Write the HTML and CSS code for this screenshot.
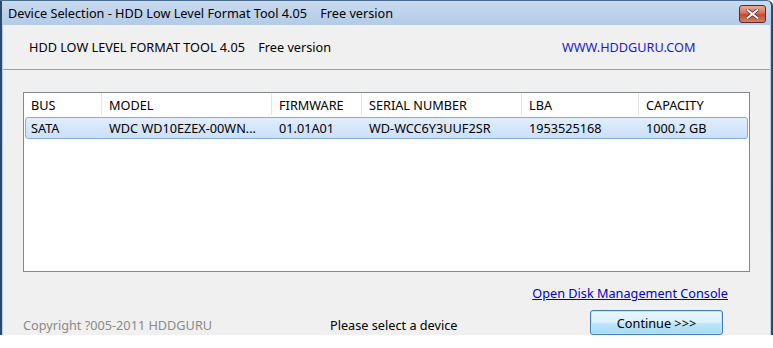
FILE: index.html
```html
<!DOCTYPE html>
<html>
<head>
<meta charset="utf-8">
<link rel="stylesheet" href="styles.css">
</head>
<body>
<div class="window">
  <div class="titlebar">
    <span class="title">Device Selection - HDD Low Level Format Tool 4.05&nbsp;&nbsp;&nbsp;&nbsp;Free version</span>
    <div class="close">
      <svg width="13" height="10" viewBox="0 0 13 10"><path d="M1.5 1 L11.5 9 M11.5 1 L1.5 9" stroke="#5a1a12" stroke-width="3.4" stroke-linecap="square"/><path d="M1.5 1 L11.5 9 M11.5 1 L1.5 9" stroke="#ffffff" stroke-width="2" stroke-linecap="square"/></svg>
    </div>
  </div>
  <div class="client">
    <div class="header">
      <span class="product">HDD LOW LEVEL FORMAT TOOL 4.05&nbsp;&nbsp;&nbsp;&nbsp;Free version</span>
      <span class="site">WWW.HDDGURU.COM</span>
    </div>
    <div class="sep"></div>
    <div class="list">
      <div class="cols head">
        <div class="c">BUS</div>
        <div class="c">MODEL</div>
        <div class="c">FIRMWARE</div>
        <div class="c">SERIAL NUMBER</div>
        <div class="c">LBA</div>
        <div class="c">CAPACITY</div>
      </div>
      <div class="cols row sel">
        <div class="c">SATA</div>
        <div class="c">WDC WD10EZEX-00WN...</div>
        <div class="c">01.01A01</div>
        <div class="c">WD-WCC6Y3UUF2SR</div>
        <div class="c">1953525168</div>
        <div class="c">1000.2 GB</div>
      </div>
    </div>
    <div class="linkrow"><a class="link">Open Disk Management Console</a></div>
    <div class="footer">
      <span class="copy">Copyright ?005-2011 HDDGURU</span>
      <span class="status">Please select a device</span>
      <button class="btn">Continue &gt;&gt;&gt;</button>
    </div>
  </div>
</div>
</body>
</html>
```
FILE: styles.css
```css
html, body { margin: 0; padding: 0; background: #ffffff; }
body { width: 773px; height: 348px; overflow: hidden; font-family: "Noto Sans", "Open Sans", sans-serif; font-size: 12.7px; color: #000; }
.window {
  height: 335px;
  box-sizing: border-box;
  border-left: 2px solid #2b4a6e;
  border-right: 2px solid #2b4a6e;
  border-top: 1px solid #4a6a8e;
  border-top-right-radius: 6px;
  background: linear-gradient(#c9dbef, #b2cae6 25px, #b9d0ea);
  display: flex;
  flex-direction: column;
  padding: 0 1px 0 1px;
  overflow: hidden;
}
.titlebar {
  height: 24px;
  flex: none;
  display: flex;
  align-items: flex-start;
  position: relative;
}
.title { margin: 4px 0 0 5px; line-height: 17px; white-space: pre; }
.close {
  position: absolute; right: 4px; top: 4px;
  width: 25px; height: 16px;
  border: 1px solid #5b2b2b;
  border-radius: 3px;
  background: linear-gradient(#e9a99a, #d7705a 45%, #c24a30 55%, #d7806a);
  display: flex; align-items: center; justify-content: center;
}
.client {
  flex: 1;
  min-height: 0;
  background: #f0f0f0;
  display: flex;
  flex-direction: column;
  overflow: hidden;
}
.header {
  height: 44px;
  flex: none;
  display: flex;
  align-items: center;
  padding: 0 0 0 26px;
}
.product { white-space: pre; width: 533px; }
.site { color: #1a1ad0; }
.sep { height: 1px; flex: none; background: #a0a0a0; margin-bottom: 22px; }
.list {
  flex: none;
  margin: 0 20px 0 20px;
  height: 180px;
  border: 1px solid #828790;
  background: #fff;
  box-sizing: border-box;
}
.cols { display: grid; grid-template-columns: 78px 170px 90px 160px 117px 1fr; }
.head { height: 23px; align-items: start; }
.head .c { border-right: 1px solid #e5e5e5; height: 22px; line-height: 18px; padding-top: 3px; box-sizing: border-box; }
.head .c:last-child { border-right: none; }
.c { padding-left: 7px; white-space: nowrap; }
.row { grid-template-columns: 76px 170px 90px 160px 117px 1fr; height: 20px; align-items: center; margin: 1px 1px 0 1px; }
.row .c:first-child { padding-left: 5px; }
.sel {
  border: 1px solid #84acdd;
  border-radius: 3px;
  background: linear-gradient(#e1edfc, #cbe0fb);
}
.linkrow { flex: none; display: flex; justify-content: flex-end; padding: 11px 42px 0 0; height: 20px; line-height: 20px; }
.link { color: #0000cc; text-decoration: underline; }
.footer { flex: none; display: flex; align-items: flex-start; padding: 7px 0 0 20px; height: 40px; box-sizing: border-box; }
.copy { color: #8a8a8a; width: 307px; line-height: 17px; margin-top: 7px; }
.status { width: 260px; line-height: 17px; margin-top: 7px; }
.btn {
  width: 133px; height: 25px;
  font-family: inherit; font-size: 12.7px; color: #000;
  border: 1px solid #3c7fb1;
  border-radius: 3px;
  background: linear-gradient(#eaf6fd, #d9f0fc 50%, #bee6fd 51%, #a7d9f5);
  box-shadow: inset 0 0 0 1px #c5e4f6;
  padding: 0;
}
```
